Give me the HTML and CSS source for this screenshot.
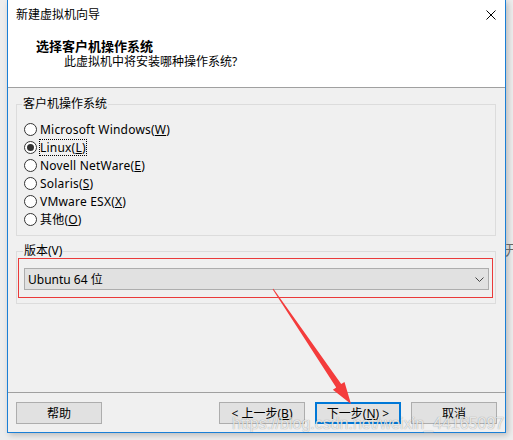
FILE: index.html
```html
<!DOCTYPE html>
<html lang="zh-CN">
<head>
<meta charset="utf-8">
<title>新建虚拟机向导</title>
<link rel="stylesheet" href="styles.css">
</head>
<body>
<div class="page">
  <div class="window">
    <div class="head">
      <div class="titlebar">
        <span class="title">新建虚拟机向导</span>
        <svg class="close" width="10" height="10" viewBox="0 0 10 10"><path d="M0.5 0.5 L9.5 9.5 M9.5 0.5 L0.5 9.5" stroke="#000" stroke-width="1"/></svg>
      </div>
      <div class="header">
        <div class="h-title">选择客户机操作系统</div>
        <div class="h-sub">此虚拟机中将安装哪种操作系统?</div>
      </div>
    </div>

    <div class="body">
      <fieldset class="group os">
        <legend>客户机操作系统</legend>
        <div class="radio-list">
          <div class="radio"><span class="dot"></span><span class="lbl">Microsoft Windows(<u>W</u>)</span></div>
          <div class="radio checked"><span class="dot"></span><span class="lbl focus">Linux(<u>L</u>)</span></div>
          <div class="radio"><span class="dot"></span><span class="lbl">Novell NetWare(<u>E</u>)</span></div>
          <div class="radio"><span class="dot"></span><span class="lbl">Solaris(<u>S</u>)</span></div>
          <div class="radio"><span class="dot"></span><span class="lbl">VMware ESX(<u>X</u>)</span></div>
          <div class="radio"><span class="dot"></span><span class="lbl">其他(<u>O</u>)</span></div>
        </div>
      </fieldset>

      <fieldset class="group ver">
        <legend>版本(V)</legend>
        <div class="mark">
          <div class="combo">
            <span>Ubuntu 64 位</span>
            <svg width="9" height="5" viewBox="0 0 9 5"><path d="M0.5 0.5 L4.5 4.5 L8.5 0.5" fill="none" stroke="#444" stroke-width="1"/></svg>
          </div>
        </div>
      </fieldset>
    </div>

    <div class="footer">
      <button class="btn help">帮助</button>
      <button class="btn">&lt; 上一步(<u>B</u>)</button>
      <button class="btn next">下一步(<u>N</u>) &gt;</button>
      <button class="btn">取消</button>
    </div>
  </div>

  <div class="side"><span>开</span></div>

  <svg class="arrow" width="513" height="440" viewBox="0 0 513 440">
    <polygon points="272.6,289.3 273.4,288.7 341.2,384.1 344.5,381.9 351,404 332.9,389.7 336.2,387.5" fill="#f43c3c"/>
  </svg>

  <div class="watermark">https://blog.csdn.net/weixin_44165097</div>
</div>
</body>
</html>
```

FILE: styles.css
```css
body {
  margin: 0;
  background: #ededed;
  font-family: "Noto Sans", "Noto Sans CJK SC", sans-serif;
  font-size: 12px;
  color: #000;
}

.page {
  position: relative;
  width: 513px;
  height: 440px;
  display: flex;
  overflow: hidden;
}

/* dialog frame */
.window {
  margin-left: 7px;
  width: 499px;
  height: 433px;
  box-sizing: border-box;
  border: 1px solid #1a7fd6;
  border-top: 0;
  background: #f0f0f0;
  display: flex;
  flex-direction: column;
  box-shadow: 2px 2px 6px rgba(0, 0, 0, 0.22);
  flex-shrink: 0;
}

.head {
  background: #fff;
  height: 87px;
  border-bottom: 1px solid #a0a0a0;
  flex-shrink: 0;
}

.titlebar {
  height: 30px;
  display: flex;
  align-items: center;
  justify-content: space-between;
  padding: 0 9px 0 8px;
  line-height: 16px;
}

.header {
  padding: 8px 0 0 28px;
  line-height: 16px;
}

.h-title {
  font-weight: bold;
  font-size: 13px;
}

.h-sub {
  padding-left: 28px;
}

/* page body */
.body {
  flex: 1;
  padding: 8px 8px 0 8px;
}

.group {
  margin: 0;
  padding: 0;
  border: 1px solid #dcdcdc;
  width: 480px;
  box-sizing: border-box;
  min-width: 0;
}

.group legend {
  padding: 0 1px;
  margin-left: 5px;
  line-height: 16px;
}

.group.ver {
  margin-top: 7px;
  padding-bottom: 5px;
}

.group.ver legend {
  margin-left: 6px;
}

.radio-list {
  padding: 8px 0 7px 7px;
}

.radio {
  height: 18px;
  display: flex;
  align-items: center;
}

.dot {
  width: 13px;
  height: 13px;
  box-sizing: border-box;
  border: 1px solid #333;
  border-radius: 50%;
  background: #fff;
  display: flex;
  align-items: center;
  justify-content: center;
  flex-shrink: 0;
}

.radio.checked .dot::after {
  content: "";
  width: 7px;
  height: 7px;
  border-radius: 50%;
  background: #333;
}

.lbl {
  margin-left: 2px;
  line-height: 15px;
  border: 1px solid transparent;
  letter-spacing: 0.2px;
}

.lbl.focus {
  border: 1px dotted #000;
}

/* red annotation frame around the version selector */
.mark {
  margin: -1px 0 0 1px;
  width: 475px;
  box-sizing: border-box;
  border: 1px solid #ea3a3a;
  padding: 9px 3px 7px 5px;
}

.combo {
  height: 22px;
  box-sizing: border-box;
  border: 1px solid #adadad;
  background: #e1e1e1;
  display: flex;
  align-items: center;
  justify-content: space-between;
  padding: 0 4px 0 3px;
}

/* button row */
.footer {
  border-top: 1px solid #a0a0a0;
  padding: 9px 8px 8px;
  display: flex;
  gap: 10px;
  flex-shrink: 0;
}

.btn {
  width: 86px;
  height: 22px;
  box-sizing: border-box;
  border: 1px solid #adadad;
  background: #e1e1e1;
  font: inherit;
  color: #000;
  padding: 0;
}

.help {
  margin-right: auto;
}

.btn.next {
  border: 2px solid #0078d7;
}

.side {
  width: 7px;
  overflow: hidden;
  padding-top: 242px;
  font-size: 14px;
  color: #666;
  line-height: 16px;
}

.side span {
  display: block;
  margin-left: -1px;
}

.arrow {
  position: absolute;
  left: 0;
  top: 0;
  pointer-events: none;
}

.watermark {
  position: absolute;
  left: 232px;
  top: 414px;
  font-family: "Liberation Sans", sans-serif;
  font-size: 16px;
  line-height: 20px;
  color: rgba(255, 255, 255, 0.8);
  text-shadow: 0 0 1px rgba(0, 0, 0, 0.45);
  pointer-events: none;
  white-space: nowrap;
}
```
